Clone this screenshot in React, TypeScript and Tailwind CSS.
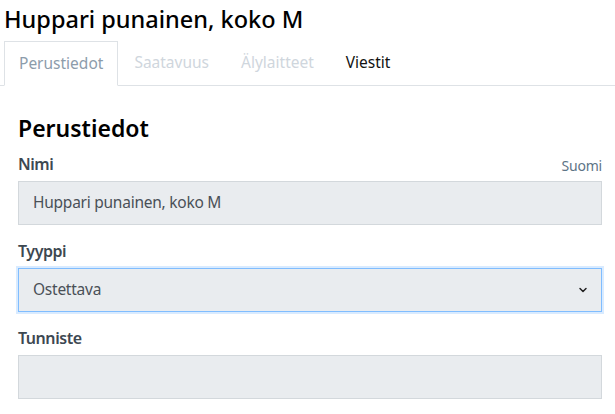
import { ChevronDown } from "lucide-react";

const tabs = [
  { label: "Perustiedot", state: "active" },
  { label: "Saatavuus", state: "disabled" },
  { label: "Älylaitteet", state: "disabled" },
  { label: "Viestit", state: "normal" },
];

const Label = ({ children }: { children: React.ReactNode }) => (
  <span className="text-[16px] font-semibold tracking-[-0.45px] text-[#3d4851]">{children}</span>
);

const App = () => {
  return (
    <div
      className="w-[615px] h-[414px] overflow-hidden bg-white text-[#212529]"
      style={{ fontFamily: '"Noto Sans", "Open Sans", sans-serif' }}
    >
      <h1 className="pl-[4px] pt-[1px] h-[41px] text-[23.5px] font-medium leading-[36px] text-black">
        Huppari punainen, koko M
      </h1>

      {/* tabs */}
      <div className="flex h-[45px] border-b border-[#dee2e6] pl-[4px]">
        {tabs.map((t) => (
          <div
            key={t.label}
            className={
              t.state === "active"
                ? "px-[14px] h-[45px] flex items-center text-[15.5px] text-[#8c9cab] border border-[#dee2e6] border-b-white bg-white -mb-px"
                : t.state === "disabled"
                ? "px-[16px] h-[44px] flex items-center text-[15.5px] text-[#cfd6dd]"
                : "px-[16px] h-[44px] flex items-center text-[15.5px] text-[#111]"
            }
          >
            {t.label}
          </div>
        ))}
      </div>

      {/* form */}
      <div className="pl-[18px] pr-[13px] pt-[27px]">
        <h2 className="text-[23px] font-semibold leading-[30px] text-black">Perustiedot</h2>

        <div className="mt-[7px] flex items-end justify-between h-[26px]">
          <Label>Nimi</Label>
          <span className="text-[14px] tracking-[-0.2px] text-[#5d7486]">Suomi</span>
        </div>
        <div className="mt-[5px] h-[44px] flex items-center px-[14px] bg-[#e9ecef] border border-[#d3d8dc] text-[15.5px] tracking-[-0.25px] text-[#495057]">
          Huppari punainen, koko M
        </div>

        <div className="mt-[12px] h-[26px] flex items-end">
          <Label>Tyyppi</Label>
        </div>
        <div className="mt-[5px] h-[44px] flex items-center justify-between px-[14px] bg-[#e9ecef] border border-[#80bdff] shadow-[0_0_0_2px_rgba(0,123,255,0.15)] text-[15.5px] tracking-[-0.25px] text-[#495057]">
          <span>Ostettava</span>
          <ChevronDown className="w-[12px] h-[12px] mr-[-2px] text-[#222]" strokeWidth={3} />
        </div>

        <div className="mt-[12px] h-[26px] flex items-end">
          <Label>Tunniste</Label>
        </div>
        <div className="mt-[5px] h-[44px] bg-[#e9ecef] border border-[#d3d8dc]" />
      </div>
    </div>
  );
};

export default App;
